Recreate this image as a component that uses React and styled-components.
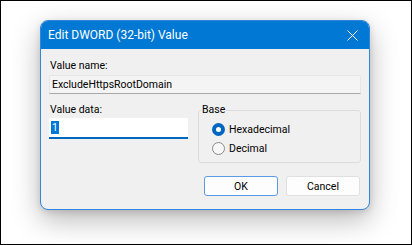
import React, {useState} from 'react';
import styled, {createGlobalStyle} from "styled-components";

const GlobalStyle = createGlobalStyle`
  html, body {
    margin: 0;
    padding: 0;
    background: #fff;
  }
  body {
    font-family: "Segoe UI", Roboto, "Noto Sans", sans-serif;
  }
`

const Frame = styled.div`
  width: 412px;
  height: 245px;
  box-sizing: border-box;
  border: 1px solid #000;
  background: #fff;
  padding: 19px 0 0 39px;
  overflow: hidden;
`

const Dialog = styled.div`
  width: 330px;
  height: 190px;
  box-sizing: border-box;
  border: 1px solid #2f86dc;
  border-radius: 8px;
  overflow: hidden;
  background: #f0f0f0;
  display: flex;
  flex-direction: column;
  box-shadow: 0 10px 28px rgba(0, 0, 0, 0.28), 0 2px 6px rgba(0, 0, 0, 0.12);
`

const TitleBar = styled.div`
  height: 28px;
  background: #0078d4;
  color: #fff;
  display: flex;
  align-items: center;
  justify-content: space-between;
  padding: 0 7px 0 7px;
  font-size: 12px;
`

const CloseBtn = styled.button`
  width: 20px;
  height: 20px;
  border: 0;
  padding: 0;
  background: transparent;
  display: flex;
  align-items: center;
  justify-content: center;
`

const Body = styled.div`
  flex: 1;
  padding: 9px 8px 13px 8px;
  font-size: 10.5px;
  color: #000;
  display: flex;
  flex-direction: column;
`

const Label = styled.div`
  height: 15px;
  line-height: 15px;
  padding-left: 1px;
`

const NameField = styled.div`
  margin-top: 2px;
  height: 19px;
  box-sizing: border-box;
  background: #f4f4f4;
  border: 1px solid #e6e6e6;
  border-bottom-color: #a8a8a8;
  border-radius: 2px 2px 0 0;
  padding: 0 2px;
  line-height: 17px;
`

const Row = styled.div`
  display: flex;
  gap: 10px;
  margin-top: 8px;
`

const Column = styled.div`
  width: 139px;
  display: flex;
  flex-direction: column;
`

const DataInput = styled.div`
  margin-top: 1px;
  height: 21px;
  box-sizing: border-box;
  background: #fff;
  border-bottom: 2px solid #0067c0;
  padding: 2px 2px 0;
  line-height: 15px;
`

const Selected = styled.span`
  background: #0078d7;
  color: #fff;
  padding: 0 1px;
`

const Group = styled.fieldset`
  flex: 1;
  margin: 2px 0 0;
  padding: 7px 0 0 13px;
  border: 1px solid #dcdcdc;
  border-radius: 3px;
  height: 59px;
  box-sizing: border-box;
  display: flex;
  flex-direction: column;
  gap: 6px;

  legend {
    padding: 0 1px;
    margin-left: -11px;
    line-height: 12px;
  }
`

const RadioRow = styled.label`
  display: flex;
  align-items: center;
  gap: 4px;
  height: 13px;
`

const RadioDot = styled.span`
  width: 13px;
  height: 13px;
  box-sizing: border-box;
  border-radius: 50%;
  border: ${p => p.checked ? '4px solid #0067c0' : '1px solid #8a8a8a'};
  background: ${p => p.checked ? '#fff' : '#f7f7f7'};
`

const Buttons = styled.div`
  margin-top: auto;
  display: flex;
  justify-content: flex-end;
  gap: 8px;
  padding-right: 1px;
`

const Button = styled.button`
  width: 74px;
  height: 20px;
  box-sizing: border-box;
  background: #fdfdfd;
  border: 1px solid ${p => p.primary ? '#5a9ce3' : '#e0e0e0'};
  border-radius: 3px;
  font: inherit;
  color: #000;
  padding: 0;
`

const App = () => {
  let [base, setBase] = useState('hex')

  return (
    <Frame>
      <GlobalStyle/>
      <Dialog>
        <TitleBar>
          <span>Edit DWORD (32-bit) Value</span>
          <CloseBtn>
            <svg width="11" height="11" viewBox="0 0 11 11">
              <path d="M0.5 0.5 L10.5 10.5 M10.5 0.5 L0.5 10.5" stroke="#fff" strokeWidth="1"/>
            </svg>
          </CloseBtn>
        </TitleBar>
        <Body>
          <Label>Value name:</Label>
          <NameField>ExcludeHttpsRootDomain</NameField>
          <Row>
            <Column>
              <Label>Value data:</Label>
              <DataInput><Selected>1</Selected></DataInput>
            </Column>
            <Group>
              <legend>Base</legend>
              <RadioRow onClick={() => setBase('hex')}>
                <RadioDot checked={base === 'hex'}/>
                Hexadecimal
              </RadioRow>
              <RadioRow onClick={() => setBase('dec')}>
                <RadioDot checked={base === 'dec'}/>
                Decimal
              </RadioRow>
            </Group>
          </Row>
          <Buttons>
            <Button primary>OK</Button>
            <Button>Cancel</Button>
          </Buttons>
        </Body>
      </Dialog>
    </Frame>
  );
};

export default App;
